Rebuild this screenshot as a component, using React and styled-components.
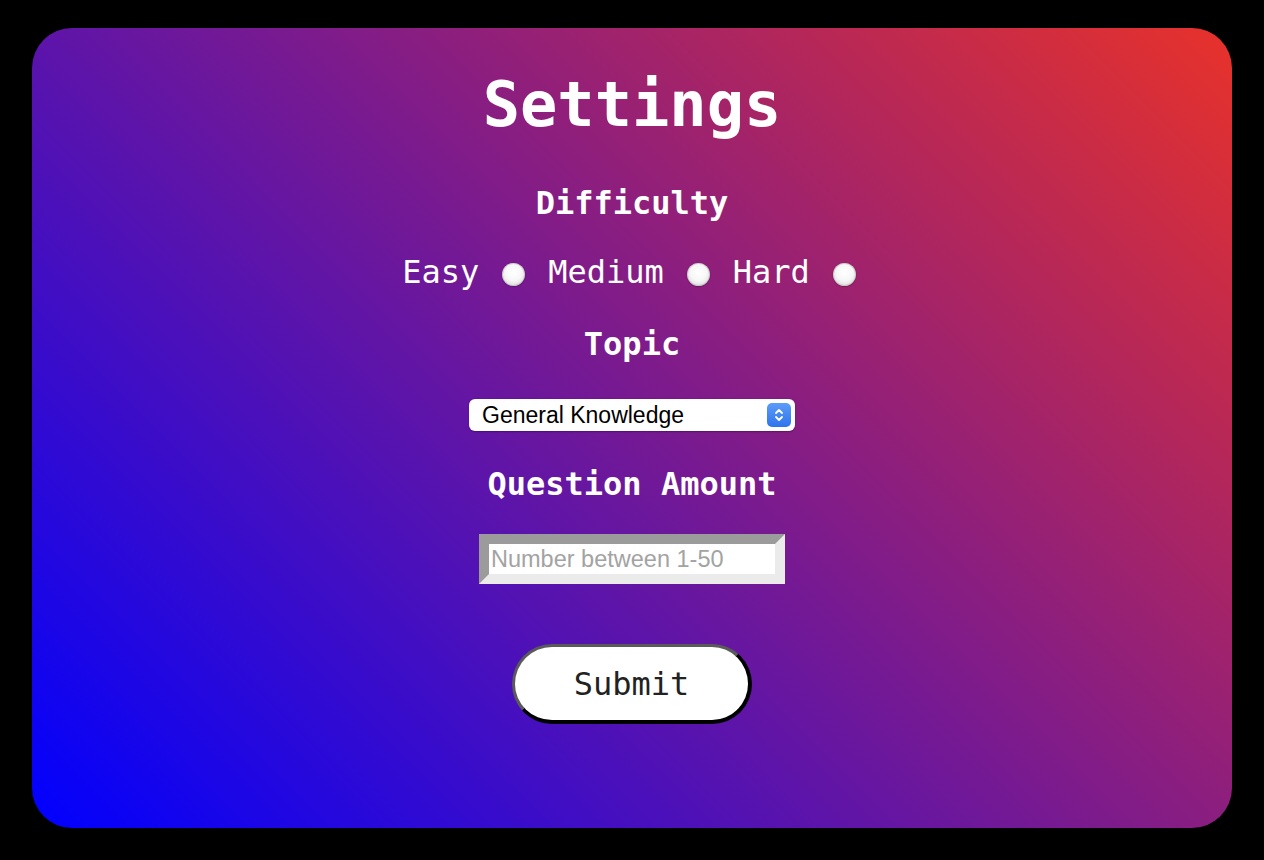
import React from "react";
import styled, { createGlobalStyle } from "styled-components";

const Global = createGlobalStyle`
  html, body { margin: 0; padding: 0; background: #000; }
  body { font-family: "DejaVu Sans Mono", monospace; }
  * { box-sizing: border-box; }
`;

const Page = styled.div`
  padding: 28px 32px 32px;
  background: #000;
  height: 860px;
`;

const Card = styled.form`
  height: 800px;
  border-radius: 40px;
  background: linear-gradient(45deg, #0000ff 0%, #e8322a 100%);
  display: flex;
  flex-direction: column;
  align-items: center;
  padding-top: 40px;
  color: #fff;
`;

const Title = styled.h1`
  margin: 0 0 42px;
  font-family: "DejaVu Sans Mono", monospace;
  font-weight: bold;
  font-size: 62px;
  line-height: 74px;
`;

const Heading = styled.h2`
  margin: 0 0 ${(p) => p.$after}px;
  font-family: "DejaVu Sans Mono", monospace;
  font-weight: bold;
  font-size: 32px;
  line-height: 38px;
`;

const RadioRow = styled.div`
  display: flex;
  align-items: center;
  gap: 23px;
  margin: 0 0 34px;
  transform: translateX(-3px);
`;

const RadioLabel = styled.label`
  font-family: "DejaVu Sans Mono", monospace;
  font-size: 32px;
  line-height: 38px;
`;

const Radio = styled.input.attrs({ type: "radio" })`
  appearance: none;
  -webkit-appearance: none;
  margin: 0;
  width: 23px;
  height: 23px;
  border-radius: 50%;
  background: radial-gradient(circle at 50% 42%, #ffffff 0%, #f7f7f7 45%, #dcdcdc 80%, #c4c4c4 100%);
  box-shadow: inset 0 0 0 1px rgba(0, 0, 0, 0.12), 0 0.5px 1.5px rgba(0, 0, 0, 0.35);
  transform: translateY(2px);
`;

const SelectWrap = styled.div`
  position: relative;
  width: 326px;
  height: 32px;
  margin: 0 0 34px;
`;

const Select = styled.select`
  appearance: none;
  -webkit-appearance: none;
  width: 100%;
  height: 100%;
  border: none;
  border-radius: 6px;
  background: #fff;
  padding: 0 0 0 13px;
  font-family: "Liberation Sans", Arial, sans-serif;
  font-size: 23px;
  color: #000;
  box-shadow: 0 0.5px 1.5px rgba(0, 0, 0, 0.3);
  outline: none;
`;

const Stepper = styled.span`
  position: absolute;
  right: 4px;
  top: 4px;
  width: 24px;
  height: 24px;
  border-radius: 5px;
  background: linear-gradient(#5c9cf8, #2e74ec);
  display: flex;
  align-items: center;
  justify-content: center;
  pointer-events: none;
`;

const NumberInput = styled.input`
  width: 306px;
  height: 50px;
  margin: 0 0 60px;
  border-style: solid;
  border-width: 10px;
  border-color: #9b9b9b #ebebeb #ebebeb #9b9b9b;
  background: #fff;
  padding: 0 2px;
  font-family: "Liberation Sans", Arial, sans-serif;
  font-size: 23.5px;
  color: #000;
  outline: none;
  &::placeholder { color: #a3a3a3; }
`;

const Submit = styled.button`
  width: 240px;
  height: 80px;
  border-radius: 40px;
  border-style: solid;
  border-width: 3px 4px 4px 3px;
  border-color: #5a5a5a #000 #000 #5a5a5a;
  background: #fff;
  color: #222;
  font-family: "DejaVu Sans Mono", monospace;
  font-size: 32px;
  padding: 0;
  cursor: pointer;
`;

export default function App() {
  return (
    <>
      <Global />
      <Page>
        <Card onSubmit={(e) => e.preventDefault()}>
          <Title>Settings</Title>
          <Heading $after={31}>Difficulty</Heading>
          <RadioRow>
            <RadioLabel htmlFor="easy">Easy</RadioLabel>
            <Radio id="easy" name="difficulty" value="easy" />
            <RadioLabel htmlFor="medium">Medium</RadioLabel>
            <Radio id="medium" name="difficulty" value="medium" />
            <RadioLabel htmlFor="hard">Hard</RadioLabel>
            <Radio id="hard" name="difficulty" value="hard" />
          </RadioRow>
          <Heading $after={36}>Topic</Heading>
          <SelectWrap>
            <Select defaultValue="9">
              <option value="9">General Knowledge</option>
              <option value="17">Science &amp; Nature</option>
              <option value="23">History</option>
            </Select>
            <Stepper>
              <svg width="12" height="16" viewBox="0 0 12 16" fill="none" stroke="#fff" strokeWidth="1.8" strokeLinecap="round" strokeLinejoin="round">
                <path d="M3 6 L6 3 L9 6" />
                <path d="M3 10 L6 13 L9 10" />
              </svg>
            </Stepper>
          </SelectWrap>
          <Heading $after={31}>Question Amount</Heading>
          <NumberInput type="number" placeholder="Number between 1-50" />
          <Submit type="submit">Submit</Submit>
        </Card>
      </Page>
    </>
  );
}
